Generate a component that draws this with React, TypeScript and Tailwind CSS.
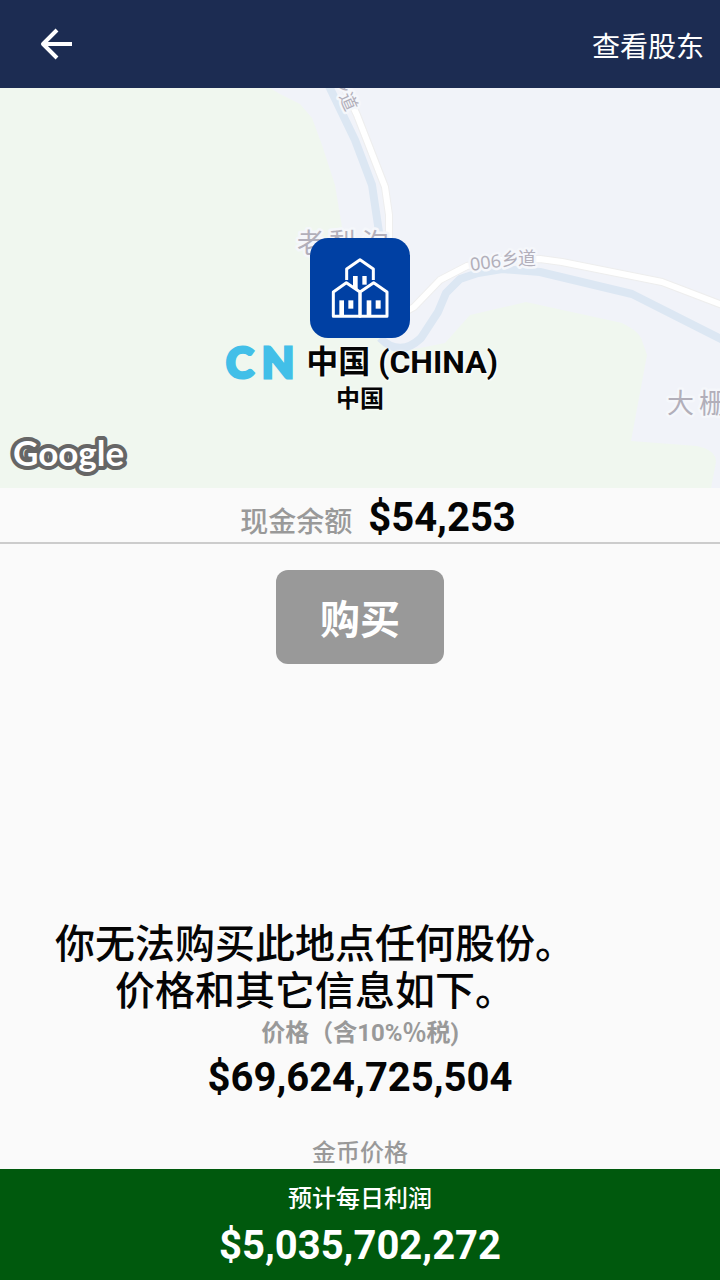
import React from "react";

function MapView() {
  return (
    <svg
      viewBox="0 88 720 400"
      preserveAspectRatio="xMidYMid slice"
      className="absolute inset-0 h-full w-full font-['Noto_Sans','Noto_Sans_CJK_SC',sans-serif]"
      aria-hidden="true"
    >
      <rect x="0" y="88" width="720" height="400" fill="#f1f3f9" />
      <path
        d="M0 88H270L280 94L300 104L312 118L322 145L335 185L342 227L346 290L383 338L389 347L402 351L420 348L445 343L470 315L500 308L526 302L622 323Q638 331 641 338L647 355L631 441L697 446Q716 450 716 462L711 488H0Z"
        fill="#f0f7ef"
      />
      <g fill="none" strokeLinejoin="round">
        <path
          d="M327 82L355 140L372 185L379 232L379 300M380 338Q400 358 421 338L438 312L446 293L460 279L478 273L502 269L540 272L632 294L725 341"
          stroke="#dce7f3"
          strokeWidth="8"
        />
        <path
          d="M340 78L357 115L385 187L389 215L389 300M405 312L414 307L440 280L467 266L500 260L540 259L562 262L662 282L725 306"
          stroke="#eeeeee"
          strokeWidth="8"
        />
        <path
          d="M340 78L357 115L385 187L389 215L389 300M405 312L414 307L440 280L467 266L500 260L540 259L562 262L662 282L725 306"
          stroke="#ffffff"
          strokeWidth="6"
        />
      </g>
      <g
        fill="#b2afba"
        stroke="#f5f7fb"
        strokeWidth="5"
        strokeLinejoin="round"
        paintOrder="stroke"
      >
        <text x="297" y="253" fontSize="27">老</text>
        <text x="329" y="253" fontSize="27">梨</text>
        <text x="362" y="253" fontSize="27">沟</text>
        <text x="667" y="413" fontSize="27">大</text>
        <text x="699" y="413" fontSize="27">栅</text>
        <text x="471" y="271" fontSize="18" transform="rotate(-8 471 271)">006</text>
        <text x="502" y="266" fontSize="18" transform="rotate(-4 502 266)">乡</text>
        <text x="518" y="265" fontSize="18">道</text>
        <text x="334" y="79" fontSize="18" transform="rotate(66 334 79)">乡</text>
        <text x="339" y="96" fontSize="18" transform="rotate(66 339 96)">道</text>
      </g>
      <text
        x="13"
        y="466"
        fontSize="35"
        fontWeight="700"
        fill="#ffffff"
        stroke="#666666"
        strokeWidth="8"
        strokeLinejoin="round"
        paintOrder="stroke"
        className="font-['Lato',sans-serif]"
      >
        Google
      </text>
    </svg>
  );
}

function HousesIcon() {
  return (
    <svg viewBox="0 0 300 300" className="h-full w-full" aria-hidden="true">
      <g fill="none" stroke="#ffffff" strokeWidth="9" strokeLinejoin="round">
        <path d="M110 126V93L150 65L190 93V126" />
        <path d="M70 235V162L109 134L150 162V235H70Z" />
        <path d="M150 235V162L191 134L231 162V235H150Z" />
      </g>
      <g fill="#ffffff">
        <path d="M129 114H143V156L129 146Z" />
        <path d="M157 114H170V140H157Z" />
        <path d="M88 187H102V235H88Z" />
        <path d="M115 187H130V212H115Z" />
        <path d="M170 187H184V235H170Z" />
        <path d="M197 187H212V212H197Z" />
      </g>
    </svg>
  );
}

export default function App() {
  return (
    <div className="flex min-h-screen flex-col bg-[#fafafa] font-['Roboto','Noto_Sans_CJK_SC',sans-serif] text-[#050505]">
      <header className="flex h-[88px] items-center justify-between bg-[#1c2c52] pl-10 pr-4 text-white">
        <button type="button" aria-label="返回" className="flex h-8 w-8 items-center justify-center">
          <svg viewBox="0 0 32 32" className="h-8 w-8" fill="none" stroke="#ffffff" strokeWidth="4" aria-hidden="true">
            <path d="M32 16H3" />
            <path d="M17 2L3 16L17 30" strokeLinejoin="round" />
          </svg>
        </button>
        <button type="button" className="pt-2 text-[28px] leading-8">查看股东</button>
      </header>

      <section className="relative flex h-[400px] flex-col items-center overflow-hidden pt-[150px]">
        <MapView />
        <div className="relative h-[100px] w-[100px] rounded-[18px] bg-[#0040a3]">
          <HousesIcon />
        </div>
        <h1 className="relative flex h-12 items-center gap-3 pl-1 text-[32px] leading-10 [text-shadow:0_0_3px_#fff,1px_1px_2px_#fff]">
          <span className="flex gap-2 font-['Lato',sans-serif] text-[42px] font-black text-[#42bfe8] [-webkit-text-stroke:3px_#42bfe8] [text-shadow:none]">
            <span>C</span>
            <span>N</span>
          </span>
          <span className="font-bold">中国 (CHINA)</span>
        </h1>
        <p className="relative pt-px text-2xl font-bold leading-6 [text-shadow:0_0_3px_#fff]">中国</p>
      </section>

      <section className="flex h-14 items-center justify-center gap-4 border-b-2 border-[#cccccc] pl-9 pt-1">
        <span className="pt-3 text-[28px] font-medium text-[#999999]">现金余额</span>
        <strong className="pt-px text-[40px] font-bold">$54,253</strong>
      </section>

      <main className="flex flex-1 flex-col items-center text-center">
        <button
          type="button"
          className="mt-[26px] h-[94px] w-[168px] rounded-xl bg-[#999999] pt-2 text-[40px] font-bold text-white"
        >
          购买
        </button>
        <p className="mt-auto self-stretch pr-[90px] text-[40px] font-medium leading-[47px]">
          你无法购买此地点任何股份。
          <br />
          价格和其它信息如下。
        </p>
        <h2 className="mt-0.5 text-2xl font-bold leading-8 text-[#999999]">价格（含10%％税)</h2>
        <strong className="text-[40px] font-bold leading-[58px]">$69,624,725,504</strong>
        <h2 className="mt-[30px] text-2xl font-medium leading-8 text-[#999999]">金币价格</h2>
      </main>

      <footer className="flex h-[111px] flex-col items-center bg-[#00590d] pt-3 text-white">
        <span className="text-2xl font-medium leading-9">预计每日利润</span>
        <strong className="text-[40px] font-bold leading-[58px]">$5,035,702,272</strong>
      </footer>
    </div>
  );
}
